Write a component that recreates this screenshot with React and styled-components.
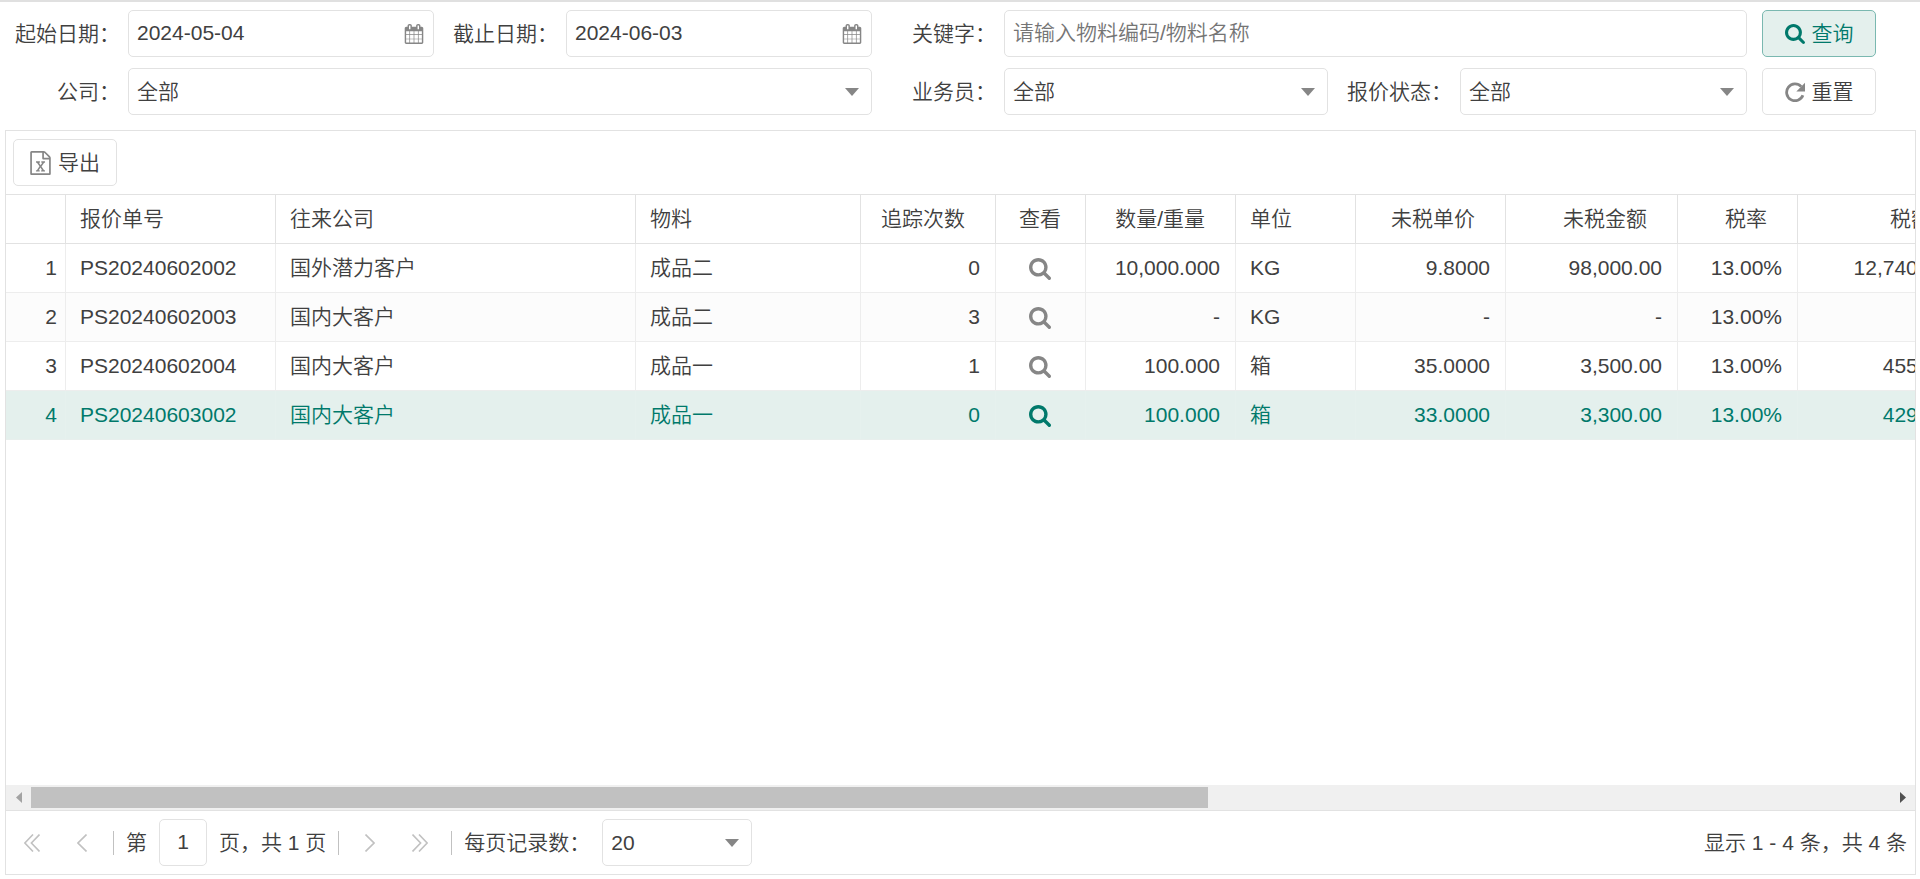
import React from "react";
import styled, { createGlobalStyle, css } from "styled-components";

const color = {
  text: "#404040",
  muted: "#868686",
  placeholder: "#757575",
  line: "#e2e2e2",
  cellLine: "#ededed",
  disabled: "#c1c1c1",
  accent: "#00796b",
  accentSoft: "#e4f0ed",
};

const GlobalStyle = createGlobalStyle`
  *, *::before, *::after { box-sizing: border-box; }
  body { margin: 0; background: #fff; }
  body, button, input, select {
    font-family: "Liberation Sans", "Noto Sans CJK SC", sans-serif;
    font-size: 21px;
    font-weight: 350;
    line-height: 30px;
    color: ${color.text};
  }
`;

const Page = styled.div`
  display: flex;
  flex-direction: column;
  min-height: 100vh;
  border-top: 2px solid #e0e0e0;
`;

const FilterForm = styled.form`
  display: grid;
  grid-template-columns: minmax(0, 857fr) minmax(0, 860fr) 114px;
  gap: 11px 15px;
  padding: 8px 44px 15px 15px;
`;

const FieldGroup = styled.div`
  display: flex;
  gap: 19px;
  padding-left: ${(p) => (p.$inset ? "25px" : "0")};
`;

const Field = styled.div`
  display: flex;
  align-items: center;
  gap: 8px;
  flex: ${(p) => p.$grow || 1} 1 0;
  min-width: 0;
`;

const Label = styled.label`
  flex: none;
  width: ${(p) => p.$width || "105px"};
  text-align: right;
  white-space: nowrap;
`;

const Control = styled.div`
  position: relative;
  flex: ${(p) => (p.$width ? "none" : "1")};
  width: ${(p) => p.$width || "auto"};
  min-width: 0;
`;

const boxed = css`
  height: 47px;
  border: 1px solid ${color.line};
  border-radius: 5px;
  background: #fff;
`;

const TextBox = styled.input`
  ${boxed}
  display: block;
  width: ${(p) => p.$width || "100%"};
  padding: 0 ${(p) => (p.$center ? "8px" : "44px")} 2px 8px;
  text-align: ${(p) => (p.$center ? "center" : "left")};
  &::placeholder { color: ${color.placeholder}; opacity: 1; }
`;

const Select = styled.select`
  ${boxed}
  display: block;
  appearance: none;
  width: 100%;
  padding: 0 40px 0 8px;
`;

const Adornment = styled.span`
  position: absolute;
  top: 0;
  bottom: 0;
  right: ${(p) => p.$right};
  display: flex;
  align-items: center;
  color: ${color.muted};
  pointer-events: none;
`;

const Button = styled.button`
  ${boxed}
  display: inline-flex;
  align-items: center;
  justify-content: center;
  gap: 7px;
  padding: 0 16px;
  white-space: nowrap;
  cursor: pointer;
  svg { color: ${color.muted}; }
  ${(p) =>
    p.$primary &&
    css`
      color: ${color.accent};
      background: ${color.accentSoft};
      border-color: #7ab8b0;
      svg { color: ${color.accent}; }
    `}
`;

const Panel = styled.section`
  display: flex;
  flex-direction: column;
  flex: 1;
  margin: 0 4px 4px 5px;
  border: 1px solid ${color.line};
  min-width: 0;
`;

const Toolbar = styled.div`
  display: flex;
  padding: 8px 7px;
  border-bottom: 1px solid ${color.line};
`;

const TableArea = styled.div`
  flex: 1;
  overflow-x: auto;
  scrollbar-width: none;
`;

const Table = styled.table`
  table-layout: fixed;
  width: 1957px;
  border-collapse: separate;
  border-spacing: 0;
`;

const HeadCell = styled.th`
  height: 49px;
  padding: 0 ${(p) => (p.$align === "right" ? "30px" : "15px")} 0 14px;
  border-right: 1px solid ${color.line};
  border-bottom: 1px solid ${color.line};
  font-weight: inherit;
  text-align: ${(p) => p.$align};
  white-space: nowrap;
`;

const Cell = styled.td`
  height: 49px;
  padding: 0 ${(p) => (p.$index ? "8px" : "15px")} 0 14px;
  border-right: 1px solid ${color.cellLine};
  border-bottom: 1px solid ${color.cellLine};
  text-align: ${(p) => p.$align};
  white-space: nowrap;
`;

const Row = styled.tr`
  &:nth-child(even) { background: #fcfcfc; }
  ${(p) =>
    p.$selected &&
    css`
      &&& { background: ${color.accentSoft}; }
      color: ${color.accent};
      ${Cell} { border-right-color: #e6f1ee; border-bottom-color: #e8efed; }
    `}
`;

const IconButton = styled.button`
  display: inline-flex;
  align-items: center;
  justify-content: center;
  width: ${(p) => p.$size};
  height: ${(p) => p.$size};
  padding: 0;
  border: 0;
  background: none;
  color: ${(p) => p.$color};
  vertical-align: middle;
  cursor: pointer;
`;

const ScrollTrack = styled.div`
  display: flex;
  height: 26px;
  background: #f0f0f0;
  border-bottom: 1px solid ${color.line};
`;

const ScrollArrow = styled.button`
  display: flex;
  align-items: center;
  justify-content: center;
  flex: none;
  width: 25px;
  padding: 0;
  border: 0;
  background: none;
  color: ${(p) => (p.$idle ? "#a3a3a3" : "#505050")};
`;

const ScrollRail = styled.div`
  flex: 1;
  padding: 2px 0;
`;

const ScrollThumb = styled.div`
  width: 63.3%;
  height: 21px;
  background: #c1c1c1;
`;

const Pager = styled.nav`
  display: flex;
  align-items: center;
  gap: 12px;
  padding: 8px 8px 8px 7px;
  white-space: nowrap;
`;

const Divider = styled.span`
  width: 1px;
  height: 24px;
  background: ${color.disabled};
`;

const Summary = styled.span`
  margin-left: auto;
`;

const SearchIcon = ({ size }) => (
  <svg width={size} height={size} viewBox="0 0 1664 1664" fill="currentColor" aria-hidden="true">
    <path d="M1152 704q0-185-131.5-316.5t-316.5-131.5-316.5 131.5-131.5 316.5 131.5 316.5 316.5 131.5 316.5-131.5 131.5-316.5zm512 832q0 52-38 90t-90 38q-54 0-90-38l-343-342q-179 124-399 124-143 0-273.5-55.5t-225-150-150-225-55.5-273.5 55.5-273.5 150-225 225-150 273.5-55.5 273.5 55.5 225 150 150 225 55.5 273.5q0 220-124 399l343 343q37 37 37 90z" />
  </svg>
);

const ResetIcon = () => (
  <svg width="20" height="20" viewBox="0 0 20 20" aria-hidden="true">
    <path d="M16.200 4.600A8.400 8.400 0 1 0 17.900 13.300" fill="none" stroke="currentColor" strokeWidth="2.800" />
    <path d="M20 .8v8.700h-8.700z" fill="currentColor" />
  </svg>
);

const CalendarIcon = () => (
  <svg width="20" height="20" viewBox="0 0 1792 1792" fill="currentColor" aria-hidden="true">
    <path d="M192 1664h288v-288h-288v288zm352 0h320v-288h-320v288zm-352-352h288v-320h-288v320zm352 0h320v-320h-320v320zm-352-384h288v-288h-288v288zm736 736h320v-288h-320v288zm-384-736h320v-288h-320v288zm768 736h288v-288h-288v288zm-384-352h320v-320h-320v320zm-352-864v-288q0-13-9.5-22.5t-22.5-9.5h-64q-13 0-22.5 9.5t-9.5 22.5v288q0 13 9.5 22.5t22.5 9.5h64q13 0 22.5-9.5t9.5-22.5zm736 864h288v-320h-288v320zm-384-384h320v-288h-320v288zm384 0h288v-288h-288v288zm32-480v-288q0-13-9.5-22.5t-22.5-9.5h-64q-13 0-22.5 9.5t-9.5 22.5v288q0 13 9.5 22.5t22.5 9.5h64q13 0 22.5-9.5t9.5-22.5zm384-64v1280q0 52-38 90t-90 38h-1408q-52 0-90-38t-38-90v-1280q0-52 38-90t90-38h128v-96q0-66 47-113t113-47h64q66 0 113 47t47 113v96h384v-96q0-66 47-113t113-47h64q66 0 113 47t47 113v96h128q52 0 90 38t38 90z" />
  </svg>
);

const ExcelIcon = () => (
  <svg width="21" height="24" viewBox="128 0 1536 1792" fill="currentColor" aria-hidden="true">
    <path d="M1596 380q28 28 48 76t20 88v1152q0 40-28 68t-68 28h-1344q-40 0-68-28t-28-68v-1600q0-40 28-68t68-28h896q40 0 88 20t76 48zm-444-244v376h376q-10-29-22-41l-313-313q-12-12-41-22zm384 1528v-1024h-416q-40 0-68-28t-28-68v-416h-768v1536h1280zm-979-234v106h281v-106h-75l103-161q5-7 10-16.5t7.5-13.5 3.5-4h2q1 4 5 10 2 4 4.5 7.5t6 8 6.5 8.5l107 161h-76v106h291v-106h-68l-192-273 195-282h67v-107h-279v107h74l-103 159q-4 7-10 16.5t-9 13.5l-2 3h-2q-1-4-5-10-6-11-17-23l-106-159h76v-107h-290v107h68l189 272-194 283h-68z" />
  </svg>
);

const CaretIcon = () => (
  <svg width="14" height="8" viewBox="0 0 14 8" fill="currentColor" aria-hidden="true">
    <path d="M0 0h14L7 8z" />
  </svg>
);

const ArrowIcon = ({ d }) => (
  <svg width="6" height="11" viewBox="0 0 6 11" fill="currentColor" aria-hidden="true">
    <path d={d} />
  </svg>
);

const ChevronIcon = ({ width, d }) => (
  <svg width={width} height="18" viewBox={`0 0 ${width} 18`} fill="none" stroke="currentColor" strokeWidth="1.6" aria-hidden="true">
    <path d={d} />
  </svg>
);

const DateField = ({ id, label, value }) => (
  <Field>
    <Label htmlFor={id}>{label}</Label>
    <Control>
      <TextBox id={id} type="text" defaultValue={value} />
      <Adornment $right="10px"><CalendarIcon /></Adornment>
    </Control>
  </Field>
);

const Dropdown = ({ id, value, width }) => (
  <Control $width={width}>
    <Select id={id} defaultValue={value}>
      <option value={value}>{value}</option>
    </Select>
    <Adornment $right="13px"><CaretIcon /></Adornment>
  </Control>
);

const PageButton = ({ label, width, d }) => (
  <IconButton type="button" aria-label={label} $size="38px" $color={color.disabled}>
    <ChevronIcon width={width} d={d} />
  </IconButton>
);

const columns = [
  { title: "", width: 60, align: "right" },
  { title: "报价单号", width: 210, align: "left" },
  { title: "往来公司", width: 360, align: "left" },
  { title: "物料", width: 225, align: "left" },
  { title: "追踪次数", width: 135, align: "right" },
  { title: "查看", width: 90, align: "center", view: true },
  { title: "数量/重量", width: 150, align: "right" },
  { title: "单位", width: 120, align: "left" },
  { title: "未税单价", width: 150, align: "right" },
  { title: "未税金额", width: 172, align: "right" },
  { title: "税率", width: 120, align: "right" },
  { title: "税额", width: 165, align: "right" },
];

const rows = [
  ["1", "PS20240602002", "国外潜力客户", "成品二", "0", "", "10,000.000", "KG", "9.8000", "98,000.00", "13.00%", "12,740.00"],
  ["2", "PS20240602003", "国内大客户", "成品二", "3", "", "-", "KG", "-", "-", "13.00%", "-"],
  ["3", "PS20240602004", "国内大客户", "成品一", "1", "", "100.000", "箱", "35.0000", "3,500.00", "13.00%", "455.00"],
  ["4", "PS20240603002", "国内大客户", "成品一", "0", "", "100.000", "箱", "33.0000", "3,300.00", "13.00%", "429.00"],
];

const selectedRow = 3;

export default function App() {
  return (
    <Page>
      <GlobalStyle />
      <FilterForm onSubmit={(e) => e.preventDefault()}>
        <FieldGroup>
          <DateField id="start" label="起始日期：" value="2024-05-04" />
          <DateField id="end" label="截止日期：" value="2024-06-03" />
        </FieldGroup>
        <FieldGroup $inset>
          <Field>
            <Label htmlFor="keyword" $width="84px">关键字：</Label>
            <Control>
              <TextBox id="keyword" type="text" placeholder="请输入物料编码/物料名称" />
            </Control>
          </Field>
        </FieldGroup>
        <Button type="submit" $primary><SearchIcon size={20} />查询</Button>

        <FieldGroup>
          <Field>
            <Label htmlFor="company">公司：</Label>
            <Dropdown id="company" value="全部" />
          </Field>
        </FieldGroup>
        <FieldGroup $inset>
          <Field $grow={416}>
            <Label htmlFor="sales" $width="84px">业务员：</Label>
            <Dropdown id="sales" value="全部" />
          </Field>
          <Field $grow={400}>
            <Label htmlFor="status">报价状态：</Label>
            <Dropdown id="status" value="全部" />
          </Field>
        </FieldGroup>
        <Button type="reset"><ResetIcon />重置</Button>
      </FilterForm>

      <Panel>
        <Toolbar>
          <Button type="button"><ExcelIcon />导出</Button>
        </Toolbar>
        <TableArea>
          <Table>
            <colgroup>
              {columns.map((c, i) => <col key={i} width={c.width} />)}
            </colgroup>
            <thead>
              <tr>
                {columns.map((c, i) => <HeadCell key={i} scope="col" $align={c.align}>{c.title}</HeadCell>)}
              </tr>
            </thead>
            <tbody>
              {rows.map((row, r) => (
                <Row key={r} $selected={r === selectedRow} aria-selected={r === selectedRow}>
                  {row.map((value, i) => (
                    <Cell key={i} $align={columns[i].align} $index={i === 0}>
                      {columns[i].view ? (
                        <IconButton type="button" aria-label="查看" $size="30px" $color={r === selectedRow ? color.accent : color.muted}>
                          <SearchIcon size={22} />
                        </IconButton>
                      ) : value}
                    </Cell>
                  ))}
                </Row>
              ))}
            </tbody>
          </Table>
        </TableArea>
        <ScrollTrack>
          <ScrollArrow type="button" aria-label="向左滚动" $idle><ArrowIcon d="M6 0v11L0 5.500z" /></ScrollArrow>
          <ScrollRail><ScrollThumb /></ScrollRail>
          <ScrollArrow type="button" aria-label="向右滚动"><ArrowIcon d="M0 0v11l6-5.500z" /></ScrollArrow>
        </ScrollTrack>
        <Pager>
          <PageButton label="首页" width={16} d="M9 .5.900 9 9 17.500M15.500.5 7.400 9l8.100 8.500" />
          <PageButton label="上一页" width={10} d="M9.500.5 1 9l8.500 8.500" />
          <Divider />
          <label htmlFor="page">第</label>
          <TextBox id="page" type="text" defaultValue="1" $center $width="48px" />
          <span>页，共 1 页</span>
          <Divider />
          <PageButton label="下一页" width={10} d="M.5.5 9 9 .5 17.500" />
          <PageButton label="末页" width={16} d="M.5.5 8.600 9 .5 17.500M7 .5 15.100 9 7 17.500" />
          <Divider />
          <label htmlFor="size">每页记录数：</label>
          <Dropdown id="size" value="20" width="150px" />
          <Summary>显示 1 - 4 条，共 4 条</Summary>
        </Pager>
      </Panel>
    </Page>
  );
}
